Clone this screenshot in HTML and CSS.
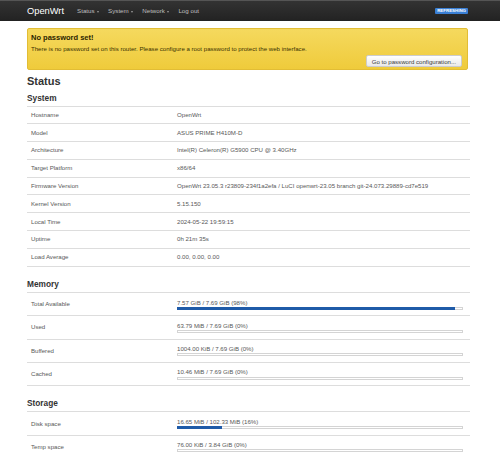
FILE: index.html
```html
<!DOCTYPE html>
<html lang="en">
<head>
<meta charset="utf-8">
<title>OpenWrt - Overview - LuCI</title>
<link rel="stylesheet" href="styles.css">
</head>
<body>
<header class="navbar">
  <div class="nav-inner">
    <span class="brand">OpenWrt</span>
    <ul class="menu">
      <li>Status <span class="caret"></span></li>
      <li>System <span class="caret"></span></li>
      <li>Network <span class="caret"></span></li>
      <li>Log out</li>
    </ul>
    <span class="badge">Refreshing</span>
  </div>
</header>

<main class="container">
  <div class="alert">
    <h4 class="alert-title">No password set!</h4>
    <p class="alert-text">There is no password set on this router. Please configure a root password to protect the web interface.</p>
    <div class="alert-actions"><button class="btn">Go to password configuration...</button></div>
  </div>

  <h2 class="page-title">Status</h2>

  <section class="section">
    <h3 class="section-title">System</h3>
    <div class="table">
      <div class="row"><div class="label">Hostname</div><div class="value">OpenWrt</div></div>
      <div class="row"><div class="label">Model</div><div class="value">ASUS PRIME H410M-D</div></div>
      <div class="row"><div class="label">Architecture</div><div class="value">Intel(R) Celeron(R) G5900 CPU @ 3.40GHz</div></div>
      <div class="row"><div class="label">Target Platform</div><div class="value">x86/64</div></div>
      <div class="row"><div class="label">Firmware Version</div><div class="value">OpenWrt 23.05.3 r23809-234f1a2efa / LuCI openwrt-23.05 branch git-24.073.29889-cd7e519</div></div>
      <div class="row"><div class="label">Kernel Version</div><div class="value">5.15.150</div></div>
      <div class="row"><div class="label">Local Time</div><div class="value">2024-05-22 19:59:15</div></div>
      <div class="row"><div class="label">Uptime</div><div class="value">0h 21m 35s</div></div>
      <div class="row"><div class="label">Load Average</div><div class="value">0.00, 0.00, 0.00</div></div>
    </div>
  </section>

  <section class="section">
    <h3 class="section-title">Memory</h3>
    <div class="table">
      <div class="row row-bar"><div class="label">Total Available</div><div class="value"><div class="ptext">7.57 GiB / 7.69 GiB (98%)</div><div class="track"><div class="fill" style="width:98%"></div></div></div></div>
      <div class="row row-bar"><div class="label">Used</div><div class="value"><div class="ptext">63.79 MiB / 7.69 GiB (0%)</div><div class="track"><div class="fill" style="width:0%"></div></div></div></div>
      <div class="row row-bar"><div class="label">Buffered</div><div class="value"><div class="ptext">1004.00 KiB / 7.69 GiB (0%)</div><div class="track"><div class="fill" style="width:0%"></div></div></div></div>
      <div class="row row-bar"><div class="label">Cached</div><div class="value"><div class="ptext">10.46 MiB / 7.69 GiB (0%)</div><div class="track"><div class="fill" style="width:0%"></div></div></div></div>
    </div>
  </section>

  <section class="section">
    <h3 class="section-title">Storage</h3>
    <div class="table">
      <div class="row row-bar"><div class="label">Disk space</div><div class="value"><div class="ptext">16.65 MiB / 102.33 MiB (16%)</div><div class="track"><div class="fill" style="width:16%"></div></div></div></div>
      <div class="row row-bar"><div class="label">Temp space</div><div class="value"><div class="ptext">76.00 KiB / 3.84 GiB (0%)</div><div class="track"><div class="fill" style="width:0%"></div></div></div></div>
    </div>
  </section>
</main>
</body>
</html>
```

FILE: styles.css
```css
* { box-sizing: border-box; }

html, body {
  margin: 0;
  padding: 0;
  background: #fff;
}

body {
  font-family: "Liberation Sans", Arial, sans-serif;
  color: #404040;
  font-size: 6.1px;
}

/* navbar */
.navbar {
  height: 21px;
  background: linear-gradient(#333, #222);
  border-top: 1px solid #555;
}

.nav-inner {
  height: 20px;
  margin-left: 27px;
  width: 443px;
  display: flex;
  align-items: center;
}

.brand {
  color: #fff;
  font-size: 9.3px;
  margin-right: 13px;
}

.menu {
  list-style: none;
  margin: 0;
  padding: 0;
  display: flex;
  gap: 9px;
  color: #bfbfbf;
  font-size: 6.2px;
}

.menu li {
  display: flex;
  align-items: center;
  line-height: 8px;
}

.caret {
  display: block;
  width: 0;
  height: 0;
  margin: 1px 0 0 2.5px;
  border-left: 1.5px solid transparent;
  border-right: 1.5px solid transparent;
  border-top: 2px solid #9a9a9a;
}

.badge {
  margin-left: auto;
  margin-right: 2px;
  background: #3a7fd5;
  color: #fff;
  font-weight: bold;
  font-size: 4.4px;
  text-transform: uppercase;
  padding: 1px 2px;
  border-radius: 1px;
  line-height: 4.6px;
}

/* main */
.container {
  margin-left: 27px;
  width: 443px;
}

.alert {
  margin-top: 7px;
  width: 441px;
  background: linear-gradient(#f5d95e, #efcb3b);
  border: 1px solid #e2bd35;
  border-radius: 2px;
  padding: 3.5px 3px 2px 3px;
  color: #3a3000;
}

.alert-title {
  margin: 0;
  font-size: 7.5px;
  line-height: 9px;
  font-weight: bold;
  color: #2b2400;
}

.alert-text {
  margin: 3.5px 0 0;
  font-size: 6.1px;
  line-height: 8px;
}

.alert-actions {
  display: flex;
  justify-content: flex-end;
  margin-top: 2px;
}

.btn {
  font-family: inherit;
  font-size: 6.1px;
  color: #404040;
  background: linear-gradient(#fff, #e9e9e9);
  border: 1px solid #ccc;
  border-radius: 2px;
  height: 12px;
  padding: 0 5px;
  margin-right: 2px;
}

.page-title {
  margin: 4.5px 0 0;
  font-size: 11px;
  line-height: 13px;
  font-weight: bold;
  color: #333;
}

.section-title {
  margin: 5px 0 3px;
  font-size: 8.3px;
  line-height: 10px;
  font-weight: bold;
  color: #333;
}

.section + .section .section-title {
  margin-top: 12.5px;
}

.table {
  border-top: 1px solid #ddd;
}

.row {
  display: grid;
  grid-template-columns: 146px 1fr;
  align-items: center;
  height: 17.8px;
  border-bottom: 1px solid #ddd;
  color: #585858;
}

.row-bar {
  height: 23.2px;
}

.label,
.value {
  padding: 0 4px;
  white-space: nowrap;
  line-height: 8px;
}

.value {
  padding-right: 7px;
}

.ptext {
  line-height: 8px;
}

.track {
  height: 3px;
  border: 1px solid #d4d4d4;
  background: #fff;
  margin-top: 0.5px;
}

.fill {
  background: #1f5ba8;
  margin: -1px 0 0 -1px;
  height: 3px;
}
```
